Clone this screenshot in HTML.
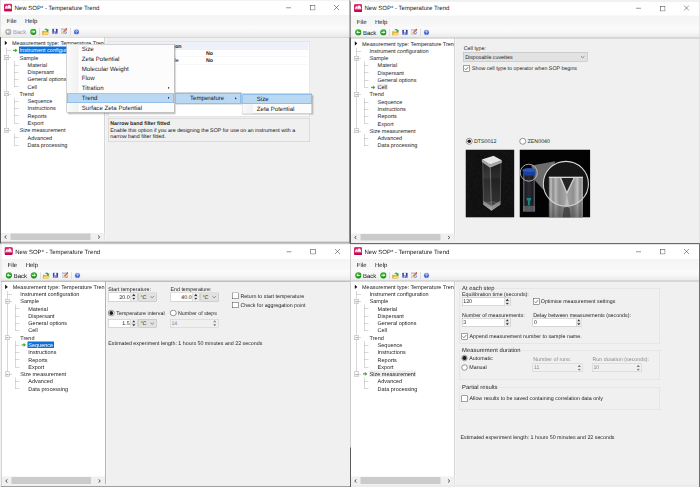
<!DOCTYPE html><html><head><meta charset="utf-8"><title>New SOP* - Temperature Trend</title><style>
html,body{margin:0;padding:0;background:#f0f0f0;}
body{width:700px;height:487px;overflow:hidden;position:relative;font-family:"Liberation Sans",sans-serif;}
#root{position:absolute;left:0;top:0;width:1400px;height:974px;transform:scale(0.5);transform-origin:0 0;}
.win{position:absolute;width:700px;height:487px;overflow:hidden;background:#f0f0f0;}
.win div,.win svg{position:absolute;}
.t{white-space:nowrap;text-rendering:geometricPrecision;}
</style></head><body><div id="root"><div class="win" style="left:0px;top:0px;"><div style="left:0px;top:0px;width:700px;height:30.4px;background:#fff;"></div><svg style="left:7.9px;top:6.6px;" width="16.4" height="16.4" viewBox="0 0 16 16" preserveAspectRatio="none"><defs><linearGradient id="ig" x1="0" y1="0" x2="0" y2="1"><stop offset="0" stop-color="#e8306f"/><stop offset="1" stop-color="#c4004e"/></linearGradient></defs><rect x="0.3" y="0.3" width="15.4" height="15.4" rx="2.6" fill="#d4005a"/><rect x="0.3" y="0.3" width="15.4" height="15.4" rx="2.6" fill="url(#ig)"/><path d="M1.4 10.2 C1.8 8 3.6 4.6 5.4 4.4 C6.2 4.3 6.8 4.8 7.2 5.4 C7.8 3.6 9 2.9 10 2.9 C12.6 2.9 14 7 14.6 10.2 Z" fill="#fff"/><path d="M5.2 9.2 L7.4 5" stroke="#d4005a" stroke-width="0.6"/><rect x="1.4" y="8.7" width="13.2" height="0.5" fill="#e23a78"/></svg><div class="t" style="left:29px;top:8.2px;font-size:12.06px;line-height:15.68px;color:#1a1a1a;">New SOP* - Temperature Trend</div><svg style="left:571px;top:9px;" width="12" height="12" viewBox="0 0 12 12" preserveAspectRatio="none"><path d="M1 6.5 L11 6.5" stroke="#333" stroke-width="1"/></svg><svg style="left:618.8px;top:9.4px;" width="12" height="12" viewBox="0 0 12 12" preserveAspectRatio="none"><rect x="1.5" y="1.5" width="9.5" height="9.5" fill="none" stroke="#333" stroke-width="1"/></svg><svg style="left:667.2px;top:9.2px;" width="12" height="12" viewBox="0 0 12 12" preserveAspectRatio="none"><path d="M1 1 L11 11 M11 1 L1 11" stroke="#333" stroke-width="1"/></svg><div style="left:0px;top:30.2px;width:700px;height:21.2px;background:linear-gradient(#f4f4f4,#f8f8f8);"></div><div class="t" style="left:13.6px;top:35.04px;font-size:12px;line-height:15.6px;color:#111;">File</div><div class="t" style="left:50px;top:35.04px;font-size:12px;line-height:15.6px;color:#111;">Help</div><div style="left:0px;top:51.4px;width:700px;height:23px;background:linear-gradient(#fcfcfc 0%,#f7f7f7 50%,#e9e9e9 100%);"></div><div style="left:0px;top:73.6px;width:700px;height:1.8px;background:linear-gradient(#c4c4c4,#8c8c8c);"></div><svg style="left:9.5px;top:56.6px;" width="13.4" height="13.4" viewBox="0 0 16 16" preserveAspectRatio="none"><defs><radialGradient id="dl" cx="0.4" cy="0.3" r="0.8"><stop offset="0" stop-color="#bfbfbf"/><stop offset="0.65" stop-color="#adadad"/><stop offset="1" stop-color="#9a9a9a"/></radialGradient></defs><circle cx="8" cy="8" r="7.5" fill="url(#dl)"/><path d="M3.2 8 L7.6 4.4 L7.6 6.9 L12.6 6.9 L12.6 9.1 L7.6 9.1 L7.6 11.6 Z" fill="#fff"/></svg><div class="t" style="left:26px;top:57.04px;font-size:12px;line-height:15.6px;color:#9a9a9a;">Back</div><svg style="left:59.8px;top:56.6px;" width="13.4" height="13.4" viewBox="0 0 16 16" preserveAspectRatio="none"><defs><radialGradient id="gr" cx="0.4" cy="0.3" r="0.8"><stop offset="0" stop-color="#4fbf3f"/><stop offset="0.65" stop-color="#239a23"/><stop offset="1" stop-color="#137316"/></radialGradient></defs><circle cx="8" cy="8" r="7.5" fill="url(#gr)"/><path d="M12.8 8 L8.4 4.4 L8.4 6.9 L3.4 6.9 L3.4 9.1 L8.4 9.1 L8.4 11.6 Z" fill="#fff"/></svg><div style="left:78.4px;top:56px;width:1px;height:14.8px;background:#c6c6c6;"></div><svg style="left:83.8px;top:56px;" width="14.4" height="13.8" viewBox="0 0 16 15.3" preserveAspectRatio="none"><path d="M1 6.5 L1 14.6 L12.6 14.6 L12.6 7.6 L6 7.6 L5 6.5 Z" fill="#e9b530" stroke="#b98a14" stroke-width="0.7"/><path d="M1.4 14.4 L4 9.4 L15.4 9.4 L12.8 14.6 Z" fill="#ffdf7e" stroke="#c99a22" stroke-width="0.6"/><path d="M5.6 3.2 C8.4 0.6 12 1.4 13.2 4.4 L14.8 3.8 L13.4 8.4 L9.6 6 L11.2 5.3 C10.2 3.4 8 2.8 5.6 3.2 Z" fill="#2fa82f" stroke="#157a15" stroke-width="0.5"/></svg><svg style="left:104px;top:57.4px;" width="11.8" height="11" viewBox="0 0 16 15" preserveAspectRatio="none"><defs><linearGradient id="sg" x1="0" y1="0" x2="0" y2="1"><stop offset="0" stop-color="#23309c"/><stop offset="1" stop-color="#5563c9"/></linearGradient></defs><rect x="0.8" y="0.8" width="14.4" height="13.4" rx="0.8" fill="url(#sg)"/><rect x="5" y="0.8" width="5.6" height="7.6" fill="#f3f5ff"/><rect x="4.6" y="10" width="6.6" height="4.2" fill="#c4cbea"/><rect x="8.2" y="10.6" width="2" height="3.2" fill="#2a379f"/></svg><svg style="left:122.4px;top:56px;" width="13" height="12.4" viewBox="0 0 16 15.3" preserveAspectRatio="none"><rect x="1" y="2" width="12.4" height="12.6" fill="#f2f3fb" stroke="#9aa0cc" stroke-width="0.8"/><rect x="1.4" y="2.4" width="11.6" height="3" fill="#b9bde6"/><path d="M8 11.4 L10.4 13.8 L14.6 9.4" fill="none" stroke="#2d49c2" stroke-width="1.6"/><path d="M4.2 12.6 L5 9.4 L12.6 1 L15 3 L7.4 11.6 Z" fill="#e2762c" stroke="#8f3d12" stroke-width="0.5"/><path d="M12 1.6 L14.6 3.6 L15.4 2.4 L13 0.6 Z" fill="#cf2030"/><path d="M4.2 12.6 L5 9.4 L7.4 11.6 Z" fill="#f1d9a6"/></svg><div style="left:140.6px;top:56px;width:1px;height:14.8px;background:#c6c6c6;"></div><svg style="left:147.4px;top:57.6px;" width="11.8" height="11.8" viewBox="0 0 16 16" preserveAspectRatio="none"><defs><radialGradient id="hg" cx="0.45" cy="0.35" r="0.75"><stop offset="0" stop-color="#6f96f2"/><stop offset="0.7" stop-color="#2a52cf"/><stop offset="1" stop-color="#1e3fae"/></radialGradient></defs><circle cx="8" cy="8" r="7.7" fill="#b9c6ea"/><circle cx="8" cy="8" r="6.3" fill="url(#hg)"/><path d="M5.8 6.4 C5.8 3.8 10.4 3.8 10.4 6.4 C10.4 8 8.2 8 8.2 9.8" fill="none" stroke="#fff" stroke-width="1.8"/><circle cx="8.2" cy="12" r="1.05" fill="#fff"/></svg><div style="left:210.2px;top:75.4px;width:490px;height:405.6px;background:#f0f0f0;"></div><div style="left:2px;top:75.4px;width:206.8px;height:405.6px;background:#fff;"></div><div style="left:208.8px;top:75.4px;width:1.4px;height:405.6px;background:#b4b4b4;"></div><div style="left:210.2px;top:75.4px;width:1.2px;height:405.6px;background:#fafafa;"></div><div style="left:12.6px;top:94.54px;width:1px;height:165.94px;background:#b0b0b0;"></div><div style="left:28.4px;top:121.88px;width:1px;height:51.36px;background:#b0b0b0;"></div><div style="left:28.4px;top:194.58px;width:1px;height:51.36px;background:#b0b0b0;"></div><div style="left:28.4px;top:267.28px;width:1px;height:22.28px;background:#b0b0b0;"></div><svg style="left:8.8px;top:81.2px;" width="6" height="9.6" viewBox="0 0 6 9.6" preserveAspectRatio="none"><path d="M0.2 0.2 L5.6 4.8 L0.2 9.4 Z" fill="#111"/></svg><div class="t" style="left:24px;top:79.52px;font-size:11px;line-height:14.3px;color:#242424;max-width:184px;overflow:hidden;">Measurement type: Temperature Trend</div><div style="left:12.6px;top:100.54px;width:9.8px;height:1px;background:#b0b0b0;"></div><div style="left:37.6px;top:93.34px;width:121.2px;height:13.2px;background:#0a6fd6;"></div><svg style="left:26px;top:96.74px;" width="9" height="7.6" viewBox="0 0 10 8" preserveAspectRatio="none"><path d="M0 3 L5 3 L5 0.6 L9.4 4 L5 7.4 L5 5 L0 5 Z" fill="#22b422" stroke="#128a12" stroke-width="0.5"/></svg><div class="t" style="left:39.2px;top:94.06px;font-size:11px;line-height:14.3px;color:#fff;">Instrument configuration</div><div style="left:12.6px;top:115.08px;width:9.8px;height:1px;background:#b0b0b0;"></div><div style="left:8.4px;top:110.48px;width:9.4px;height:9.2px;background:linear-gradient(#fff,#e9e9e9);border:1px solid #adadad;box-sizing:border-box;"></div><div style="left:10.6px;top:114.58px;width:5.2px;height:1px;background:#6d78b0;"></div><div class="t" style="left:39.2px;top:108.6px;font-size:11px;line-height:14.3px;color:#242424;">Sample</div><div style="left:28.4px;top:129.62px;width:8.8px;height:1px;background:#b0b0b0;"></div><div class="t" style="left:55.2px;top:123.14px;font-size:11px;line-height:14.3px;color:#242424;">Material</div><div style="left:28.4px;top:144.16px;width:8.8px;height:1px;background:#b0b0b0;"></div><div class="t" style="left:55.2px;top:137.68px;font-size:11px;line-height:14.3px;color:#242424;">Dispersant</div><div style="left:28.4px;top:158.7px;width:8.8px;height:1px;background:#b0b0b0;"></div><div class="t" style="left:55.2px;top:152.22px;font-size:11px;line-height:14.3px;color:#242424;">General options</div><div style="left:28.4px;top:173.24px;width:8.8px;height:1px;background:#b0b0b0;"></div><div class="t" style="left:55.2px;top:166.76px;font-size:11px;line-height:14.3px;color:#242424;">Cell</div><div style="left:12.6px;top:187.78px;width:9.8px;height:1px;background:#b0b0b0;"></div><div style="left:8.4px;top:183.18px;width:9.4px;height:9.2px;background:linear-gradient(#fff,#e9e9e9);border:1px solid #adadad;box-sizing:border-box;"></div><div style="left:10.6px;top:187.28px;width:5.2px;height:1px;background:#6d78b0;"></div><div class="t" style="left:39.2px;top:181.3px;font-size:11px;line-height:14.3px;color:#242424;">Trend</div><div style="left:28.4px;top:202.32px;width:8.8px;height:1px;background:#b0b0b0;"></div><div class="t" style="left:55.2px;top:195.84px;font-size:11px;line-height:14.3px;color:#242424;">Sequence</div><div style="left:28.4px;top:216.86px;width:8.8px;height:1px;background:#b0b0b0;"></div><div class="t" style="left:55.2px;top:210.38px;font-size:11px;line-height:14.3px;color:#242424;">Instructions</div><div style="left:28.4px;top:231.4px;width:8.8px;height:1px;background:#b0b0b0;"></div><div class="t" style="left:55.2px;top:224.92px;font-size:11px;line-height:14.3px;color:#242424;">Reports</div><div style="left:28.4px;top:245.94px;width:8.8px;height:1px;background:#b0b0b0;"></div><div class="t" style="left:55.2px;top:239.46px;font-size:11px;line-height:14.3px;color:#242424;">Export</div><div style="left:12.6px;top:260.48px;width:9.8px;height:1px;background:#b0b0b0;"></div><div style="left:8.4px;top:255.88px;width:9.4px;height:9.2px;background:linear-gradient(#fff,#e9e9e9);border:1px solid #adadad;box-sizing:border-box;"></div><div style="left:10.6px;top:259.98px;width:5.2px;height:1px;background:#6d78b0;"></div><div class="t" style="left:39.2px;top:254px;font-size:11px;line-height:14.3px;color:#242424;">Size measurement</div><div style="left:28.4px;top:275.02px;width:8.8px;height:1px;background:#b0b0b0;"></div><div class="t" style="left:55.2px;top:268.54px;font-size:11px;line-height:14.3px;color:#242424;">Advanced</div><div style="left:28.4px;top:289.56px;width:8.8px;height:1px;background:#b0b0b0;"></div><div class="t" style="left:55.2px;top:283.08px;font-size:11px;line-height:14.3px;color:#242424;">Data processing</div><div style="left:2px;top:465.8px;width:206.8px;height:15.2px;background:#f0f0f0;"></div><div style="left:21.2px;top:466.6px;width:159.6px;height:13.4px;background:#cbcbcb;"></div><svg style="left:8.4px;top:470px;" width="6" height="8" viewBox="0 0 6 8" preserveAspectRatio="none"><path d="M5 0.8 L1.4 4 L5 7.2" fill="none" stroke="#333" stroke-width="1.6"/></svg><svg style="left:194.8px;top:470px;" width="6" height="8" viewBox="0 0 6 8" preserveAspectRatio="none"><path d="M1 0.8 L4.6 4 L1 7.2" fill="none" stroke="#333" stroke-width="1.6"/></svg><div style="left:0px;top:481px;width:700px;height:6.6px;background:linear-gradient(#f0f0f0 0%,#ececec 20%,#c6c6c6 40%,#a0a0a0 72%,#a2a2a2 88%,#c8c8c8 100%);"></div><div style="left:0px;top:0px;width:1.8px;height:74px;background:#e2e2e2;"></div><div style="left:0px;top:74px;width:1.8px;height:413.6px;background:#5c5c5c;"></div><div style="left:0px;top:0px;width:700px;height:1.4px;background:#e6e6e6;"></div><div style="left:698.4px;top:0px;width:1.6px;height:74px;background:#b4b4b4;"></div><div style="left:698.4px;top:74px;width:1.6px;height:413.6px;background:#8a8a8a;"></div><div style="left:215.6px;top:82.8px;width:404.2px;height:150.4px;background:#fff;border:1px solid #cfcfcf;box-sizing:border-box;"></div><div style="left:216.6px;top:84.2px;width:400.8px;height:14.4px;background:#eef1f8;"></div><div style="left:216.6px;top:98.6px;width:400.8px;height:1px;background:#e6e9f2;"></div><div style="left:216.6px;top:113.2px;width:400.8px;height:1px;background:#eef0f6;"></div><div style="left:216.6px;top:127.8px;width:400.8px;height:1px;background:#eef0f6;"></div><div class="t" style="right:336.8px;top:85.79px;font-size:10.6px;line-height:13.78px;color:#242424;font-weight:bold;">Instrument configuration</div><div class="t" style="left:230px;top:99.79px;font-size:10.6px;line-height:13.78px;color:#242424;">Narrow band filter fitted</div><div class="t" style="right:342.8px;top:114.39px;font-size:10.6px;line-height:13.78px;color:#242424;">Autotitrator available</div><div class="t" style="left:412px;top:99.79px;font-size:10.6px;line-height:13.78px;color:#242424;font-weight:bold;">No</div><div class="t" style="left:412px;top:114.39px;font-size:10.6px;line-height:13.78px;color:#242424;font-weight:bold;">No</div><div style="left:215.6px;top:236px;width:404.2px;height:48px;background:#f0f0f0;border:1px solid #c9c9c9;box-sizing:border-box;"></div><div class="t" style="left:220.6px;top:240.79px;font-size:10.6px;line-height:13.78px;color:#242424;font-weight:bold;">Narrow band filter fitted</div><div class="t" style="left:220.6px;top:254.39px;font-size:10.6px;line-height:13.78px;color:#111;">Enable this option if you are designing the SOP for use on an instrument with a</div><div class="t" style="left:220.6px;top:266.99px;font-size:10.6px;line-height:13.78px;color:#111;">narrow band filter fitted.</div><div style="left:132.8px;top:87.8px;width:216.6px;height:137.4px;background:#fcfcfc;border:1px solid #ababab;box-sizing:border-box;box-shadow:2px 2px 3px rgba(0,0,0,.35);"></div><div style="left:134px;top:89px;width:23.2px;height:135px;background:linear-gradient(90deg,#fafafa,#f1f1f1);"></div><div class="t" style="left:163.6px;top:90.1px;font-size:12.2px;line-height:15.86px;color:#1a1a1a;">Size</div><div class="t" style="left:163.6px;top:109.7px;font-size:12.2px;line-height:15.86px;color:#1a1a1a;">Zeta Potential</div><div class="t" style="left:163.6px;top:129.7px;font-size:12.2px;line-height:15.86px;color:#1a1a1a;">Molecular Weight</div><div class="t" style="left:163.6px;top:148.5px;font-size:12.2px;line-height:15.86px;color:#1a1a1a;">Flow</div><div class="t" style="left:163.6px;top:167.7px;font-size:12.2px;line-height:15.86px;color:#1a1a1a;">Titration</div><svg style="left:335.6px;top:173px;" width="3.6" height="5.2" viewBox="0 0 4 6" preserveAspectRatio="none"><path d="M0.4 0.4 L3.6 3 L0.4 5.6 Z" fill="#111"/></svg><div style="left:134.4px;top:186.8px;width:213.2px;height:18.8px;background:#b8d8f3;border:1px solid #6aa6de;box-sizing:border-box;"></div><div class="t" style="left:163.6px;top:187.9px;font-size:12.2px;line-height:15.86px;color:#1a1a1a;">Trend</div><svg style="left:335.6px;top:193.2px;" width="3.6" height="5.2" viewBox="0 0 4 6" preserveAspectRatio="none"><path d="M0.4 0.4 L3.6 3 L0.4 5.6 Z" fill="#111"/></svg><div class="t" style="left:163.6px;top:207.5px;font-size:12.2px;line-height:15.86px;color:#1a1a1a;">Surface Zeta Potential</div><div style="left:349.2px;top:185px;width:133.6px;height:23.2px;background:#fcfcfc;border:1px solid #ababab;box-sizing:border-box;box-shadow:2px 2px 3px rgba(0,0,0,.35);"></div><div style="left:350.4px;top:186.2px;width:131.2px;height:20.8px;background:#b8d8f3;border:1px solid #6aa6de;box-sizing:border-box;"></div><div class="t" style="left:380px;top:189.1px;font-size:12.2px;line-height:15.86px;color:#1a1a1a;">Temperature</div><svg style="left:470px;top:194.4px;" width="3.6" height="5.2" viewBox="0 0 4 6" preserveAspectRatio="none"><path d="M0.4 0.4 L3.6 3 L0.4 5.6 Z" fill="#111"/></svg><div style="left:483.8px;top:187px;width:140.4px;height:40.8px;background:#fcfcfc;border:1px solid #ababab;box-sizing:border-box;box-shadow:2px 2px 3px rgba(0,0,0,.35);"></div><div style="left:485px;top:188.2px;width:21.2px;height:38.4px;background:linear-gradient(90deg,#fafafa,#f1f1f1);"></div><div style="left:485.4px;top:188.4px;width:137.2px;height:19.2px;background:#b8d8f3;border:1px solid #6aa6de;box-sizing:border-box;"></div><div class="t" style="left:513.6px;top:190.7px;font-size:12.2px;line-height:15.86px;color:#1a1a1a;">Size</div><div class="t" style="left:513.6px;top:210.3px;font-size:12.2px;line-height:15.86px;color:#1a1a1a;">Zeta Potential</div></div><div class="win" style="left:700px;top:1.2px;"><div style="left:0px;top:0px;width:700px;height:30.4px;background:#fff;"></div><svg style="left:7.9px;top:6.6px;" width="16.4" height="16.4" viewBox="0 0 16 16" preserveAspectRatio="none"><defs><linearGradient id="ig" x1="0" y1="0" x2="0" y2="1"><stop offset="0" stop-color="#e8306f"/><stop offset="1" stop-color="#c4004e"/></linearGradient></defs><rect x="0.3" y="0.3" width="15.4" height="15.4" rx="2.6" fill="#d4005a"/><rect x="0.3" y="0.3" width="15.4" height="15.4" rx="2.6" fill="url(#ig)"/><path d="M1.4 10.2 C1.8 8 3.6 4.6 5.4 4.4 C6.2 4.3 6.8 4.8 7.2 5.4 C7.8 3.6 9 2.9 10 2.9 C12.6 2.9 14 7 14.6 10.2 Z" fill="#fff"/><path d="M5.2 9.2 L7.4 5" stroke="#d4005a" stroke-width="0.6"/><rect x="1.4" y="8.7" width="13.2" height="0.5" fill="#e23a78"/></svg><div class="t" style="left:29px;top:8.2px;font-size:12.06px;line-height:15.68px;color:#1a1a1a;">New SOP* - Temperature Trend</div><svg style="left:571px;top:9px;" width="12" height="12" viewBox="0 0 12 12" preserveAspectRatio="none"><path d="M1 6.5 L11 6.5" stroke="#333" stroke-width="1"/></svg><svg style="left:618.8px;top:9.4px;" width="12" height="12" viewBox="0 0 12 12" preserveAspectRatio="none"><rect x="1.5" y="1.5" width="9.5" height="9.5" fill="none" stroke="#333" stroke-width="1"/></svg><svg style="left:667.2px;top:9.2px;" width="12" height="12" viewBox="0 0 12 12" preserveAspectRatio="none"><path d="M1 1 L11 11 M11 1 L1 11" stroke="#333" stroke-width="1"/></svg><div style="left:0px;top:30.2px;width:700px;height:21.2px;background:linear-gradient(#f4f4f4,#f8f8f8);"></div><div class="t" style="left:13.6px;top:35.04px;font-size:12px;line-height:15.6px;color:#111;">File</div><div class="t" style="left:50px;top:35.04px;font-size:12px;line-height:15.6px;color:#111;">Help</div><div style="left:0px;top:51.4px;width:700px;height:23px;background:linear-gradient(#fcfcfc 0%,#f7f7f7 50%,#e9e9e9 100%);"></div><div style="left:0px;top:73.6px;width:700px;height:1.8px;background:linear-gradient(#c4c4c4,#8c8c8c);"></div><svg style="left:9.5px;top:56.6px;" width="13.4" height="13.4" viewBox="0 0 16 16" preserveAspectRatio="none"><defs><radialGradient id="gl" cx="0.4" cy="0.3" r="0.8"><stop offset="0" stop-color="#4fbf3f"/><stop offset="0.65" stop-color="#239a23"/><stop offset="1" stop-color="#137316"/></radialGradient></defs><circle cx="8" cy="8" r="7.5" fill="url(#gl)"/><path d="M3.2 8 L7.6 4.4 L7.6 6.9 L12.6 6.9 L12.6 9.1 L7.6 9.1 L7.6 11.6 Z" fill="#fff"/></svg><div class="t" style="left:26px;top:57.04px;font-size:12px;line-height:15.6px;color:#111;">Back</div><svg style="left:59.8px;top:56.6px;" width="13.4" height="13.4" viewBox="0 0 16 16" preserveAspectRatio="none"><defs><radialGradient id="gr" cx="0.4" cy="0.3" r="0.8"><stop offset="0" stop-color="#4fbf3f"/><stop offset="0.65" stop-color="#239a23"/><stop offset="1" stop-color="#137316"/></radialGradient></defs><circle cx="8" cy="8" r="7.5" fill="url(#gr)"/><path d="M12.8 8 L8.4 4.4 L8.4 6.9 L3.4 6.9 L3.4 9.1 L8.4 9.1 L8.4 11.6 Z" fill="#fff"/></svg><div style="left:78.4px;top:56px;width:1px;height:14.8px;background:#c6c6c6;"></div><svg style="left:83.8px;top:56px;" width="14.4" height="13.8" viewBox="0 0 16 15.3" preserveAspectRatio="none"><path d="M1 6.5 L1 14.6 L12.6 14.6 L12.6 7.6 L6 7.6 L5 6.5 Z" fill="#e9b530" stroke="#b98a14" stroke-width="0.7"/><path d="M1.4 14.4 L4 9.4 L15.4 9.4 L12.8 14.6 Z" fill="#ffdf7e" stroke="#c99a22" stroke-width="0.6"/><path d="M5.6 3.2 C8.4 0.6 12 1.4 13.2 4.4 L14.8 3.8 L13.4 8.4 L9.6 6 L11.2 5.3 C10.2 3.4 8 2.8 5.6 3.2 Z" fill="#2fa82f" stroke="#157a15" stroke-width="0.5"/></svg><svg style="left:104px;top:57.4px;" width="11.8" height="11" viewBox="0 0 16 15" preserveAspectRatio="none"><defs><linearGradient id="sg" x1="0" y1="0" x2="0" y2="1"><stop offset="0" stop-color="#23309c"/><stop offset="1" stop-color="#5563c9"/></linearGradient></defs><rect x="0.8" y="0.8" width="14.4" height="13.4" rx="0.8" fill="url(#sg)"/><rect x="5" y="0.8" width="5.6" height="7.6" fill="#f3f5ff"/><rect x="4.6" y="10" width="6.6" height="4.2" fill="#c4cbea"/><rect x="8.2" y="10.6" width="2" height="3.2" fill="#2a379f"/></svg><svg style="left:122.4px;top:56px;" width="13" height="12.4" viewBox="0 0 16 15.3" preserveAspectRatio="none"><rect x="1" y="2" width="12.4" height="12.6" fill="#f2f3fb" stroke="#9aa0cc" stroke-width="0.8"/><rect x="1.4" y="2.4" width="11.6" height="3" fill="#b9bde6"/><path d="M8 11.4 L10.4 13.8 L14.6 9.4" fill="none" stroke="#2d49c2" stroke-width="1.6"/><path d="M4.2 12.6 L5 9.4 L12.6 1 L15 3 L7.4 11.6 Z" fill="#e2762c" stroke="#8f3d12" stroke-width="0.5"/><path d="M12 1.6 L14.6 3.6 L15.4 2.4 L13 0.6 Z" fill="#cf2030"/><path d="M4.2 12.6 L5 9.4 L7.4 11.6 Z" fill="#f1d9a6"/></svg><div style="left:140.6px;top:56px;width:1px;height:14.8px;background:#c6c6c6;"></div><svg style="left:147.4px;top:57.6px;" width="11.8" height="11.8" viewBox="0 0 16 16" preserveAspectRatio="none"><defs><radialGradient id="hg" cx="0.45" cy="0.35" r="0.75"><stop offset="0" stop-color="#6f96f2"/><stop offset="0.7" stop-color="#2a52cf"/><stop offset="1" stop-color="#1e3fae"/></radialGradient></defs><circle cx="8" cy="8" r="7.7" fill="#b9c6ea"/><circle cx="8" cy="8" r="6.3" fill="url(#hg)"/><path d="M5.8 6.4 C5.8 3.8 10.4 3.8 10.4 6.4 C10.4 8 8.2 8 8.2 9.8" fill="none" stroke="#fff" stroke-width="1.8"/><circle cx="8.2" cy="12" r="1.05" fill="#fff"/></svg><div style="left:210.2px;top:75.4px;width:490px;height:405.6px;background:#f0f0f0;"></div><div style="left:2px;top:75.4px;width:206.8px;height:405.6px;background:#fff;"></div><div style="left:208.8px;top:75.4px;width:1.4px;height:405.6px;background:#b4b4b4;"></div><div style="left:210.2px;top:75.4px;width:1.2px;height:405.6px;background:#fafafa;"></div><div style="left:12.6px;top:94.54px;width:1px;height:165.94px;background:#b0b0b0;"></div><div style="left:28.4px;top:121.88px;width:1px;height:51.36px;background:#b0b0b0;"></div><div style="left:28.4px;top:194.58px;width:1px;height:51.36px;background:#b0b0b0;"></div><div style="left:28.4px;top:267.28px;width:1px;height:22.28px;background:#b0b0b0;"></div><svg style="left:8.8px;top:81.2px;" width="6" height="9.6" viewBox="0 0 6 9.6" preserveAspectRatio="none"><path d="M0.2 0.2 L5.6 4.8 L0.2 9.4 Z" fill="#111"/></svg><div class="t" style="left:24px;top:79.52px;font-size:11px;line-height:14.3px;color:#242424;max-width:184px;overflow:hidden;">Measurement type: Temperature Trend</div><div style="left:12.6px;top:100.54px;width:9.8px;height:1px;background:#b0b0b0;"></div><div class="t" style="left:39.2px;top:94.06px;font-size:11px;line-height:14.3px;color:#242424;">Instrument configuration</div><div style="left:12.6px;top:115.08px;width:9.8px;height:1px;background:#b0b0b0;"></div><div style="left:8.4px;top:110.48px;width:9.4px;height:9.2px;background:linear-gradient(#fff,#e9e9e9);border:1px solid #adadad;box-sizing:border-box;"></div><div style="left:10.6px;top:114.58px;width:5.2px;height:1px;background:#6d78b0;"></div><div class="t" style="left:39.2px;top:108.6px;font-size:11px;line-height:14.3px;color:#242424;">Sample</div><div style="left:28.4px;top:129.62px;width:8.8px;height:1px;background:#b0b0b0;"></div><div class="t" style="left:55.2px;top:123.14px;font-size:11px;line-height:14.3px;color:#242424;">Material</div><div style="left:28.4px;top:144.16px;width:8.8px;height:1px;background:#b0b0b0;"></div><div class="t" style="left:55.2px;top:137.68px;font-size:11px;line-height:14.3px;color:#242424;">Dispersant</div><div style="left:28.4px;top:158.7px;width:8.8px;height:1px;background:#b0b0b0;"></div><div class="t" style="left:55.2px;top:152.22px;font-size:11px;line-height:14.3px;color:#242424;">General options</div><div style="left:28.4px;top:173.24px;width:8.8px;height:1px;background:#b0b0b0;"></div><div style="left:53.6px;top:166.04px;width:22.15px;height:13.2px;background:#eeeeee;"></div><svg style="left:42px;top:169.44px;" width="9" height="7.6" viewBox="0 0 10 8" preserveAspectRatio="none"><path d="M0 3 L5 3 L5 0.6 L9.4 4 L5 7.4 L5 5 L0 5 Z" fill="#22b422" stroke="#128a12" stroke-width="0.5"/></svg><div class="t" style="left:55.2px;top:166.76px;font-size:11px;line-height:14.3px;color:#242424;">Cell</div><div style="left:12.6px;top:187.78px;width:9.8px;height:1px;background:#b0b0b0;"></div><div style="left:8.4px;top:183.18px;width:9.4px;height:9.2px;background:linear-gradient(#fff,#e9e9e9);border:1px solid #adadad;box-sizing:border-box;"></div><div style="left:10.6px;top:187.28px;width:5.2px;height:1px;background:#6d78b0;"></div><div class="t" style="left:39.2px;top:181.3px;font-size:11px;line-height:14.3px;color:#242424;">Trend</div><div style="left:28.4px;top:202.32px;width:8.8px;height:1px;background:#b0b0b0;"></div><div class="t" style="left:55.2px;top:195.84px;font-size:11px;line-height:14.3px;color:#242424;">Sequence</div><div style="left:28.4px;top:216.86px;width:8.8px;height:1px;background:#b0b0b0;"></div><div class="t" style="left:55.2px;top:210.38px;font-size:11px;line-height:14.3px;color:#242424;">Instructions</div><div style="left:28.4px;top:231.4px;width:8.8px;height:1px;background:#b0b0b0;"></div><div class="t" style="left:55.2px;top:224.92px;font-size:11px;line-height:14.3px;color:#242424;">Reports</div><div style="left:28.4px;top:245.94px;width:8.8px;height:1px;background:#b0b0b0;"></div><div class="t" style="left:55.2px;top:239.46px;font-size:11px;line-height:14.3px;color:#242424;">Export</div><div style="left:12.6px;top:260.48px;width:9.8px;height:1px;background:#b0b0b0;"></div><div style="left:8.4px;top:255.88px;width:9.4px;height:9.2px;background:linear-gradient(#fff,#e9e9e9);border:1px solid #adadad;box-sizing:border-box;"></div><div style="left:10.6px;top:259.98px;width:5.2px;height:1px;background:#6d78b0;"></div><div class="t" style="left:39.2px;top:254px;font-size:11px;line-height:14.3px;color:#242424;">Size measurement</div><div style="left:28.4px;top:275.02px;width:8.8px;height:1px;background:#b0b0b0;"></div><div class="t" style="left:55.2px;top:268.54px;font-size:11px;line-height:14.3px;color:#242424;">Advanced</div><div style="left:28.4px;top:289.56px;width:8.8px;height:1px;background:#b0b0b0;"></div><div class="t" style="left:55.2px;top:283.08px;font-size:11px;line-height:14.3px;color:#242424;">Data processing</div><div style="left:2px;top:465.8px;width:206.8px;height:15.2px;background:#f0f0f0;"></div><div style="left:21.2px;top:466.6px;width:159.6px;height:13.4px;background:#cbcbcb;"></div><svg style="left:8.4px;top:470px;" width="6" height="8" viewBox="0 0 6 8" preserveAspectRatio="none"><path d="M5 0.8 L1.4 4 L5 7.2" fill="none" stroke="#333" stroke-width="1.6"/></svg><svg style="left:194.8px;top:470px;" width="6" height="8" viewBox="0 0 6 8" preserveAspectRatio="none"><path d="M1 0.8 L4.6 4 L1 7.2" fill="none" stroke="#333" stroke-width="1.6"/></svg><div style="left:0px;top:481px;width:700px;height:6.6px;background:linear-gradient(#f2f2f2 0%,#f0f0f0 55%,#6a6a6a 62%,#6a6a6a 88%,#bbb 100%);"></div><div style="left:0px;top:0px;width:2.3px;height:74px;background:#9a9a9a;"></div><div style="left:0px;top:74px;width:2.3px;height:413.6px;background:#5c5c5c;"></div><div style="left:0px;top:0px;width:700px;height:1.4px;background:#e6e6e6;"></div><div style="left:698.6px;top:0px;width:1.4px;height:486px;background:#d4d4d4;"></div><div style="left:-700px;top:-1.2px;width:1400px;height:974px;"><div class="t" style="left:927.6px;top:90.19px;font-size:10.6px;line-height:13.78px;color:#242424;">Cell type:</div><div style="left:926px;top:104px;width:248.6px;height:18.6px;background:#e2e2e2;border:1px solid #b6b6b6;box-sizing:border-box;"></div><div class="t" style="left:930.4px;top:107.69px;font-size:10.6px;line-height:13.78px;color:#242424;">Disposable cuvettes</div><svg style="left:1161px;top:110.5px;" width="8.8" height="6" viewBox="0 0 10 7" preserveAspectRatio="none"><path d="M1 1.5 L5 5.5 L9 1.5" fill="none" stroke="#444" stroke-width="1.3"/></svg><div style="left:926.6px;top:130px;width:12.8px;height:12.8px;background:#fff;border:1px solid #444;box-sizing:border-box;"></div><svg style="left:928.4px;top:131.6px;" width="9.6" height="9.6" viewBox="0 0 10 10" preserveAspectRatio="none"><path d="M1.4 5.2 L4 7.8 L8.8 2.2" fill="none" stroke="#222" stroke-width="1.2"/></svg><div class="t" style="left:944px;top:130.19px;font-size:10.6px;line-height:13.78px;color:#242424;">Show cell type to operator when SOP begins</div><div style="left:932px;top:276px;width:12.8px;height:12.8px;background:#fff;border:1px solid #333;border-radius:50%;box-sizing:border-box;"></div><div style="left:934.8px;top:278.8px;width:7.2px;height:7.2px;background:#1a1a1a;border-radius:50%;"></div><div class="t" style="left:948px;top:276.99px;font-size:10.6px;line-height:13.78px;color:#242424;">DTS0012</div><div style="left:1039.2px;top:276px;width:12.8px;height:12.8px;background:#fff;border:1px solid #333;border-radius:50%;box-sizing:border-box;"></div><div class="t" style="left:1055.2px;top:276.99px;font-size:10.6px;line-height:13.78px;color:#242424;">ZEN0040</div><svg style="left:931.2px;top:299.2px;" width="97.8" height="136.2" viewBox="0 0 195 273" preserveAspectRatio="none">
<defs>
<linearGradient id="c1l" x1="0" y1="0" x2="0" y2="1"><stop offset="0" stop-color="#262626"/><stop offset=".3" stop-color="#3a3a3a"/><stop offset=".36" stop-color="#2c2c2c"/><stop offset=".8" stop-color="#3b3b3b"/><stop offset="1" stop-color="#8c8c8c"/></linearGradient>
<linearGradient id="c1r" x1="0" y1="0" x2="0" y2="1"><stop offset="0" stop-color="#1b1b1b"/><stop offset=".3" stop-color="#2d2d2d"/><stop offset=".36" stop-color="#222"/><stop offset=".8" stop-color="#303030"/><stop offset="1" stop-color="#7a7a7a"/></linearGradient>
<filter id="nz" x="0" y="0" width="100%" height="100%"><feTurbulence type="fractalNoise" baseFrequency="0.35" numOctaves="2" seed="3"/><feColorMatrix values="0 0 0 0 1  0 0 0 0 1  0 0 0 0 1  0.5 0.5 0.5 0 -0.62"/></filter>
</defs>
<rect width="195" height="273" fill="#0f0f0f"/>
<rect width="195" height="273" filter="url(#nz)" opacity=".1"/>
<path d="M68 52 L99 73 L103.4 244 L71 220 Z" fill="url(#c1l)"/>
<path d="M99 73 L142 52 L139 220 L103.4 244 Z" fill="url(#c1r)"/>
<path d="M71 205 L103 228 L139.4 205 L139 220 L103.4 244 L71 220 Z" fill="#bdbdbd" opacity=".55"/>
<path d="M71 220 L106 209 L139 220" fill="none" stroke="#9a9a9a" stroke-width="1.6" opacity=".7"/>
<path d="M99 73 L103.4 244" stroke="#b5b5b5" stroke-width="2.4" opacity=".85"/>
<path d="M68.5 52 L71.5 220" stroke="#8e8e8e" stroke-width="2" opacity=".8"/>
<path d="M141.5 52 L138.5 220" stroke="#8a8a8a" stroke-width="2" opacity=".8"/>
<path d="M71 220 L103.4 244 L139 220" fill="none" stroke="#d0d0d0" stroke-width="2.4" opacity=".85"/>
<path d="M65 40 L65 50 L97.5 73 L145 53 L145 43 L97.5 61 Z" fill="#a9a9a9"/>
<path d="M65 40 L112 25 L145 43 L97.5 61 Z" fill="#dcdcdc"/>
<path d="M70 40.5 L111 28 L139 43 L97.5 57 Z" fill="#e6e6e6"/>
</svg><svg style="left:1039.4px;top:299.2px;" width="141.4" height="136.2" viewBox="0 0 282 273" preserveAspectRatio="none">
<defs>
<clipPath id="bc"><circle cx="185" cy="137.7" r="90"/></clipPath>
<linearGradient id="c2b" x1="0" y1="0" x2="1" y2="0"><stop offset="0" stop-color="#6d6d6d"/><stop offset=".06" stop-color="#c2c2c2"/><stop offset=".12" stop-color="#8b8b8b"/><stop offset=".2" stop-color="#b9b9b9"/><stop offset=".3" stop-color="#8f8f8f"/><stop offset=".5" stop-color="#a6a6a6"/><stop offset=".72" stop-color="#909090"/><stop offset=".84" stop-color="#c0c0c0"/><stop offset=".92" stop-color="#8a8a8a"/><stop offset="1" stop-color="#b5b5b5"/></linearGradient>
<linearGradient id="c2d" x1="0" y1="0" x2="0" y2="1"><stop offset="0" stop-color="#000" stop-opacity="0"/><stop offset="1" stop-color="#000" stop-opacity=".35"/></linearGradient>
<linearGradient id="c2s" x1="0" y1="0" x2="1" y2="0"><stop offset="0" stop-color="#62646c"/><stop offset=".2" stop-color="#1e1e24"/><stop offset=".5" stop-color="#2c2c34"/><stop offset=".8" stop-color="#1c1c22"/><stop offset="1" stop-color="#5e606a"/></linearGradient>
</defs>
<rect width="282" height="273" fill="#030303"/>
<path d="M47 64 L143 47 L101 168 L62 124 Z" fill="#757575" opacity=".92"/>
<rect x="14" y="92" width="48" height="158" rx="5" fill="url(#c2s)"/>
<rect x="14" y="226" width="48" height="24" rx="5" fill="#7d7f88" opacity=".55"/>
<path d="M13 79 Q37 72 63 79 L62 102 Q37 108 14 102 Z" fill="#1b3f9c"/>
<path d="M13 79 Q37 72 63 79 L63 87 Q37 92 13 87 Z" fill="#2f58be"/>
<path d="M28 194 L47 194 L45 204 L41 204 L41 224 L34 224 L34 204 L30 204 Z" fill="#168a80"/>
<circle cx="37" cy="93" r="34" fill="none" stroke="#cfcfcf" stroke-width="3.2"/>
<rect x="117" y="150" width="136" height="123" fill="url(#c2b)"/>
<rect x="117" y="150" width="136" height="123" fill="url(#c2d)"/>
<path d="M172 273 L177 236 Q188 226 199 236 L204 273 Z" fill="#333" opacity=".7"/>
<circle cx="185" cy="137.7" r="90" fill="#161616"/>
<g clip-path="url(#bc)">
<rect x="117" y="111" width="136" height="130" fill="url(#c2b)"/>
<rect x="117" y="109" width="136" height="5" fill="#dedede"/>
<path d="M160 114 L221 114 L189 180 Z" fill="#cfcfcf"/>
<path d="M167 114 L215 114 L189 168 Z" fill="#242424"/>
<path d="M189 176 L180 240 L200 240 Z" fill="#d0d0d0" opacity=".6"/>
</g>
<circle cx="185" cy="137.7" r="90" fill="none" stroke="#d8d8d8" stroke-width="4.2"/>
</svg></div></div><div class="win" style="left:1.4px;top:487.6px;"><div style="left:0px;top:0px;width:700px;height:30.4px;background:#fff;"></div><svg style="left:7.9px;top:6.6px;" width="16.4" height="16.4" viewBox="0 0 16 16" preserveAspectRatio="none"><defs><linearGradient id="ig" x1="0" y1="0" x2="0" y2="1"><stop offset="0" stop-color="#e8306f"/><stop offset="1" stop-color="#c4004e"/></linearGradient></defs><rect x="0.3" y="0.3" width="15.4" height="15.4" rx="2.6" fill="#d4005a"/><rect x="0.3" y="0.3" width="15.4" height="15.4" rx="2.6" fill="url(#ig)"/><path d="M1.4 10.2 C1.8 8 3.6 4.6 5.4 4.4 C6.2 4.3 6.8 4.8 7.2 5.4 C7.8 3.6 9 2.9 10 2.9 C12.6 2.9 14 7 14.6 10.2 Z" fill="#fff"/><path d="M5.2 9.2 L7.4 5" stroke="#d4005a" stroke-width="0.6"/><rect x="1.4" y="8.7" width="13.2" height="0.5" fill="#e23a78"/></svg><div class="t" style="left:29px;top:8.2px;font-size:12.06px;line-height:15.68px;color:#1a1a1a;">New SOP* - Temperature Trend</div><svg style="left:571px;top:9px;" width="12" height="12" viewBox="0 0 12 12" preserveAspectRatio="none"><path d="M1 6.5 L11 6.5" stroke="#333" stroke-width="1"/></svg><svg style="left:618.8px;top:9.4px;" width="12" height="12" viewBox="0 0 12 12" preserveAspectRatio="none"><rect x="1.5" y="1.5" width="9.5" height="9.5" fill="none" stroke="#333" stroke-width="1"/></svg><svg style="left:667.2px;top:9.2px;" width="12" height="12" viewBox="0 0 12 12" preserveAspectRatio="none"><path d="M1 1 L11 11 M11 1 L1 11" stroke="#333" stroke-width="1"/></svg><div style="left:0px;top:30.2px;width:700px;height:21.2px;background:linear-gradient(#f4f4f4,#f8f8f8);"></div><div class="t" style="left:13.6px;top:35.04px;font-size:12px;line-height:15.6px;color:#111;">File</div><div class="t" style="left:50px;top:35.04px;font-size:12px;line-height:15.6px;color:#111;">Help</div><div style="left:0px;top:51.4px;width:700px;height:23px;background:linear-gradient(#fcfcfc 0%,#f7f7f7 50%,#e9e9e9 100%);"></div><div style="left:0px;top:73.6px;width:700px;height:1.8px;background:linear-gradient(#c4c4c4,#8c8c8c);"></div><svg style="left:9.5px;top:56.6px;" width="13.4" height="13.4" viewBox="0 0 16 16" preserveAspectRatio="none"><defs><radialGradient id="gl" cx="0.4" cy="0.3" r="0.8"><stop offset="0" stop-color="#4fbf3f"/><stop offset="0.65" stop-color="#239a23"/><stop offset="1" stop-color="#137316"/></radialGradient></defs><circle cx="8" cy="8" r="7.5" fill="url(#gl)"/><path d="M3.2 8 L7.6 4.4 L7.6 6.9 L12.6 6.9 L12.6 9.1 L7.6 9.1 L7.6 11.6 Z" fill="#fff"/></svg><div class="t" style="left:26px;top:57.04px;font-size:12px;line-height:15.6px;color:#111;">Back</div><svg style="left:59.8px;top:56.6px;" width="13.4" height="13.4" viewBox="0 0 16 16" preserveAspectRatio="none"><defs><radialGradient id="gr" cx="0.4" cy="0.3" r="0.8"><stop offset="0" stop-color="#4fbf3f"/><stop offset="0.65" stop-color="#239a23"/><stop offset="1" stop-color="#137316"/></radialGradient></defs><circle cx="8" cy="8" r="7.5" fill="url(#gr)"/><path d="M12.8 8 L8.4 4.4 L8.4 6.9 L3.4 6.9 L3.4 9.1 L8.4 9.1 L8.4 11.6 Z" fill="#fff"/></svg><div style="left:78.4px;top:56px;width:1px;height:14.8px;background:#c6c6c6;"></div><svg style="left:83.8px;top:56px;" width="14.4" height="13.8" viewBox="0 0 16 15.3" preserveAspectRatio="none"><path d="M1 6.5 L1 14.6 L12.6 14.6 L12.6 7.6 L6 7.6 L5 6.5 Z" fill="#e9b530" stroke="#b98a14" stroke-width="0.7"/><path d="M1.4 14.4 L4 9.4 L15.4 9.4 L12.8 14.6 Z" fill="#ffdf7e" stroke="#c99a22" stroke-width="0.6"/><path d="M5.6 3.2 C8.4 0.6 12 1.4 13.2 4.4 L14.8 3.8 L13.4 8.4 L9.6 6 L11.2 5.3 C10.2 3.4 8 2.8 5.6 3.2 Z" fill="#2fa82f" stroke="#157a15" stroke-width="0.5"/></svg><svg style="left:104px;top:57.4px;" width="11.8" height="11" viewBox="0 0 16 15" preserveAspectRatio="none"><defs><linearGradient id="sg" x1="0" y1="0" x2="0" y2="1"><stop offset="0" stop-color="#23309c"/><stop offset="1" stop-color="#5563c9"/></linearGradient></defs><rect x="0.8" y="0.8" width="14.4" height="13.4" rx="0.8" fill="url(#sg)"/><rect x="5" y="0.8" width="5.6" height="7.6" fill="#f3f5ff"/><rect x="4.6" y="10" width="6.6" height="4.2" fill="#c4cbea"/><rect x="8.2" y="10.6" width="2" height="3.2" fill="#2a379f"/></svg><svg style="left:122.4px;top:56px;" width="13" height="12.4" viewBox="0 0 16 15.3" preserveAspectRatio="none"><rect x="1" y="2" width="12.4" height="12.6" fill="#f2f3fb" stroke="#9aa0cc" stroke-width="0.8"/><rect x="1.4" y="2.4" width="11.6" height="3" fill="#b9bde6"/><path d="M8 11.4 L10.4 13.8 L14.6 9.4" fill="none" stroke="#2d49c2" stroke-width="1.6"/><path d="M4.2 12.6 L5 9.4 L12.6 1 L15 3 L7.4 11.6 Z" fill="#e2762c" stroke="#8f3d12" stroke-width="0.5"/><path d="M12 1.6 L14.6 3.6 L15.4 2.4 L13 0.6 Z" fill="#cf2030"/><path d="M4.2 12.6 L5 9.4 L7.4 11.6 Z" fill="#f1d9a6"/></svg><div style="left:140.6px;top:56px;width:1px;height:14.8px;background:#c6c6c6;"></div><svg style="left:147.4px;top:57.6px;" width="11.8" height="11.8" viewBox="0 0 16 16" preserveAspectRatio="none"><defs><radialGradient id="hg" cx="0.45" cy="0.35" r="0.75"><stop offset="0" stop-color="#6f96f2"/><stop offset="0.7" stop-color="#2a52cf"/><stop offset="1" stop-color="#1e3fae"/></radialGradient></defs><circle cx="8" cy="8" r="7.7" fill="#b9c6ea"/><circle cx="8" cy="8" r="6.3" fill="url(#hg)"/><path d="M5.8 6.4 C5.8 3.8 10.4 3.8 10.4 6.4 C10.4 8 8.2 8 8.2 9.8" fill="none" stroke="#fff" stroke-width="1.8"/><circle cx="8.2" cy="12" r="1.05" fill="#fff"/></svg><div style="left:210.2px;top:75.4px;width:490px;height:405.6px;background:#f0f0f0;"></div><div style="left:2px;top:75.4px;width:206.8px;height:405.6px;background:#fff;"></div><div style="left:208.8px;top:75.4px;width:1.4px;height:405.6px;background:#b4b4b4;"></div><div style="left:210.2px;top:75.4px;width:1.2px;height:405.6px;background:#fafafa;"></div><div style="left:12.6px;top:94.54px;width:1px;height:165.94px;background:#b0b0b0;"></div><div style="left:28.4px;top:121.88px;width:1px;height:51.36px;background:#b0b0b0;"></div><div style="left:28.4px;top:194.58px;width:1px;height:51.36px;background:#b0b0b0;"></div><div style="left:28.4px;top:267.28px;width:1px;height:22.28px;background:#b0b0b0;"></div><svg style="left:8.8px;top:81.2px;" width="6" height="9.6" viewBox="0 0 6 9.6" preserveAspectRatio="none"><path d="M0.2 0.2 L5.6 4.8 L0.2 9.4 Z" fill="#111"/></svg><div class="t" style="left:24px;top:79.52px;font-size:11px;line-height:14.3px;color:#242424;max-width:184px;overflow:hidden;">Measurement type: Temperature Trend</div><div style="left:12.6px;top:100.54px;width:9.8px;height:1px;background:#b0b0b0;"></div><div class="t" style="left:39.2px;top:94.06px;font-size:11px;line-height:14.3px;color:#242424;">Instrument configuration</div><div style="left:12.6px;top:115.08px;width:9.8px;height:1px;background:#b0b0b0;"></div><div style="left:8.4px;top:110.48px;width:9.4px;height:9.2px;background:linear-gradient(#fff,#e9e9e9);border:1px solid #adadad;box-sizing:border-box;"></div><div style="left:10.6px;top:114.58px;width:5.2px;height:1px;background:#6d78b0;"></div><div class="t" style="left:39.2px;top:108.6px;font-size:11px;line-height:14.3px;color:#242424;">Sample</div><div style="left:28.4px;top:129.62px;width:8.8px;height:1px;background:#b0b0b0;"></div><div class="t" style="left:55.2px;top:123.14px;font-size:11px;line-height:14.3px;color:#242424;">Material</div><div style="left:28.4px;top:144.16px;width:8.8px;height:1px;background:#b0b0b0;"></div><div class="t" style="left:55.2px;top:137.68px;font-size:11px;line-height:14.3px;color:#242424;">Dispersant</div><div style="left:28.4px;top:158.7px;width:8.8px;height:1px;background:#b0b0b0;"></div><div class="t" style="left:55.2px;top:152.22px;font-size:11px;line-height:14.3px;color:#242424;">General options</div><div style="left:28.4px;top:173.24px;width:8.8px;height:1px;background:#b0b0b0;"></div><div class="t" style="left:55.2px;top:166.76px;font-size:11px;line-height:14.3px;color:#242424;">Cell</div><div style="left:12.6px;top:187.78px;width:9.8px;height:1px;background:#b0b0b0;"></div><div style="left:8.4px;top:183.18px;width:9.4px;height:9.2px;background:linear-gradient(#fff,#e9e9e9);border:1px solid #adadad;box-sizing:border-box;"></div><div style="left:10.6px;top:187.28px;width:5.2px;height:1px;background:#6d78b0;"></div><div class="t" style="left:39.2px;top:181.3px;font-size:11px;line-height:14.3px;color:#242424;">Trend</div><div style="left:28.4px;top:202.32px;width:8.8px;height:1px;background:#b0b0b0;"></div><div style="left:53.6px;top:195.12px;width:52.74px;height:13.2px;background:#0a6fd6;"></div><svg style="left:42px;top:198.52px;" width="9" height="7.6" viewBox="0 0 10 8" preserveAspectRatio="none"><path d="M0 3 L5 3 L5 0.6 L9.4 4 L5 7.4 L5 5 L0 5 Z" fill="#22b422" stroke="#128a12" stroke-width="0.5"/></svg><div class="t" style="left:55.2px;top:195.84px;font-size:11px;line-height:14.3px;color:#fff;">Sequence</div><div style="left:28.4px;top:216.86px;width:8.8px;height:1px;background:#b0b0b0;"></div><div class="t" style="left:55.2px;top:210.38px;font-size:11px;line-height:14.3px;color:#242424;">Instructions</div><div style="left:28.4px;top:231.4px;width:8.8px;height:1px;background:#b0b0b0;"></div><div class="t" style="left:55.2px;top:224.92px;font-size:11px;line-height:14.3px;color:#242424;">Reports</div><div style="left:28.4px;top:245.94px;width:8.8px;height:1px;background:#b0b0b0;"></div><div class="t" style="left:55.2px;top:239.46px;font-size:11px;line-height:14.3px;color:#242424;">Export</div><div style="left:12.6px;top:260.48px;width:9.8px;height:1px;background:#b0b0b0;"></div><div style="left:8.4px;top:255.88px;width:9.4px;height:9.2px;background:linear-gradient(#fff,#e9e9e9);border:1px solid #adadad;box-sizing:border-box;"></div><div style="left:10.6px;top:259.98px;width:5.2px;height:1px;background:#6d78b0;"></div><div class="t" style="left:39.2px;top:254px;font-size:11px;line-height:14.3px;color:#242424;">Size measurement</div><div style="left:28.4px;top:275.02px;width:8.8px;height:1px;background:#b0b0b0;"></div><div class="t" style="left:55.2px;top:268.54px;font-size:11px;line-height:14.3px;color:#242424;">Advanced</div><div style="left:28.4px;top:289.56px;width:8.8px;height:1px;background:#b0b0b0;"></div><div class="t" style="left:55.2px;top:283.08px;font-size:11px;line-height:14.3px;color:#242424;">Data processing</div><div style="left:2px;top:465.8px;width:206.8px;height:15.2px;background:#f0f0f0;"></div><div style="left:21.2px;top:466.6px;width:159.6px;height:13.4px;background:#cbcbcb;"></div><svg style="left:8.4px;top:470px;" width="6" height="8" viewBox="0 0 6 8" preserveAspectRatio="none"><path d="M5 0.8 L1.4 4 L5 7.2" fill="none" stroke="#333" stroke-width="1.6"/></svg><svg style="left:194.8px;top:470px;" width="6" height="8" viewBox="0 0 6 8" preserveAspectRatio="none"><path d="M1 0.8 L4.6 4 L1 7.2" fill="none" stroke="#333" stroke-width="1.6"/></svg><div style="left:0px;top:481px;width:700px;height:6.6px;background:linear-gradient(#f0f0f0 0%,#efefef 55%,#8a8a8a 70%,#6a6a6a 100%);"></div><div style="left:0px;top:0px;width:1.8px;height:74px;background:#e2e2e2;"></div><div style="left:0px;top:74px;width:1.8px;height:413.6px;background:#b0b0b0;"></div><div style="left:0px;top:0px;width:700px;height:1.4px;background:#e6e6e6;"></div><div style="left:-1.4px;top:-487.6px;width:1400px;height:974px;"><div class="t" style="left:216.6px;top:572.39px;font-size:10.6px;line-height:13.78px;color:#242424;">Start temperature:</div><div style="left:216px;top:585px;width:59.2px;height:17.6px;background:#fff;border:1px solid #b4b4b4;box-sizing:border-box;"></div><div style="left:260.8px;top:586px;width:13.4px;height:15.6px;background:#efefef;border-left:1px solid #c4c4c4;box-sizing:border-box;"></div><div style="left:260.8px;top:593.3px;width:13.4px;height:1px;background:#cfcfcf;"></div><svg style="left:264px;top:587.2px;" width="7.2" height="5.2" viewBox="0 0 6 5" preserveAspectRatio="none"><path d="M0.3 4.6 L3 0.6 L5.7 4.6 Z" fill="#333"/></svg><svg style="left:264px;top:595.2px;" width="7.2" height="5.2" viewBox="0 0 6 5" preserveAspectRatio="none"><path d="M0.3 0.4 L3 4.4 L5.7 0.4 Z" fill="#333"/></svg><div class="t" style="right:1140.8px;top:587.59px;font-size:10.6px;line-height:13.78px;color:#242424;">20.0</div><div style="left:276.6px;top:585px;width:36.6px;height:17.6px;background:#e2e2e2;border:1px solid #b6b6b6;box-sizing:border-box;"></div><div class="t" style="left:281px;top:588.19px;font-size:10.6px;line-height:13.78px;color:#242424;">°C</div><svg style="left:299.6px;top:591px;" width="8.8" height="6" viewBox="0 0 10 7" preserveAspectRatio="none"><path d="M1 1.5 L5 5.5 L9 1.5" fill="none" stroke="#444" stroke-width="1.3"/></svg><div class="t" style="left:341px;top:572.39px;font-size:10.6px;line-height:13.78px;color:#242424;">End temperature:</div><div style="left:340px;top:585px;width:59.2px;height:17.6px;background:#fff;border:1px solid #b4b4b4;box-sizing:border-box;"></div><div style="left:384.8px;top:586px;width:13.4px;height:15.6px;background:#efefef;border-left:1px solid #c4c4c4;box-sizing:border-box;"></div><div style="left:384.8px;top:593.3px;width:13.4px;height:1px;background:#cfcfcf;"></div><svg style="left:388px;top:587.2px;" width="7.2" height="5.2" viewBox="0 0 6 5" preserveAspectRatio="none"><path d="M0.3 4.6 L3 0.6 L5.7 4.6 Z" fill="#333"/></svg><svg style="left:388px;top:595.2px;" width="7.2" height="5.2" viewBox="0 0 6 5" preserveAspectRatio="none"><path d="M0.3 0.4 L3 4.4 L5.7 0.4 Z" fill="#333"/></svg><div class="t" style="right:1016.8px;top:587.59px;font-size:10.6px;line-height:13.78px;color:#242424;">40.0</div><div style="left:400.6px;top:585px;width:36.6px;height:17.6px;background:#e2e2e2;border:1px solid #b6b6b6;box-sizing:border-box;"></div><div class="t" style="left:405px;top:588.19px;font-size:10.6px;line-height:13.78px;color:#242424;">°C</div><svg style="left:423.6px;top:591px;" width="8.8" height="6" viewBox="0 0 10 7" preserveAspectRatio="none"><path d="M1 1.5 L5 5.5 L9 1.5" fill="none" stroke="#444" stroke-width="1.3"/></svg><div style="left:464px;top:585.2px;width:12.8px;height:12.8px;background:#fff;border:1px solid #444;box-sizing:border-box;"></div><div class="t" style="left:481px;top:586.19px;font-size:10.6px;line-height:13.78px;color:#242424;">Return to start temperature</div><div style="left:464px;top:603.6px;width:12.8px;height:12.8px;background:#fff;border:1px solid #444;box-sizing:border-box;"></div><div class="t" style="left:481px;top:603.79px;font-size:10.6px;line-height:13.78px;color:#242424;">Check for aggregation point</div><div style="left:216.4px;top:619.6px;width:12.8px;height:12.8px;background:#fff;border:1px solid #333;border-radius:50%;box-sizing:border-box;"></div><div style="left:219.2px;top:622.4px;width:7.2px;height:7.2px;background:#1a1a1a;border-radius:50%;"></div><div class="t" style="left:232.6px;top:619.79px;font-size:10.6px;line-height:13.78px;color:#242424;">Temperature interval</div><div style="left:340px;top:619.6px;width:12.8px;height:12.8px;background:#fff;border:1px solid #333;border-radius:50%;box-sizing:border-box;"></div><div class="t" style="left:356px;top:619.79px;font-size:10.6px;line-height:13.78px;color:#242424;">Number of steps</div><div style="left:216px;top:637.6px;width:59.2px;height:17.6px;background:#fff;border:1px solid #b4b4b4;box-sizing:border-box;"></div><div style="left:260.8px;top:638.6px;width:13.4px;height:15.6px;background:#efefef;border-left:1px solid #c4c4c4;box-sizing:border-box;"></div><div style="left:260.8px;top:645.9px;width:13.4px;height:1px;background:#cfcfcf;"></div><svg style="left:264px;top:639.8px;" width="7.2" height="5.2" viewBox="0 0 6 5" preserveAspectRatio="none"><path d="M0.3 4.6 L3 0.6 L5.7 4.6 Z" fill="#333"/></svg><svg style="left:264px;top:647.8px;" width="7.2" height="5.2" viewBox="0 0 6 5" preserveAspectRatio="none"><path d="M0.3 0.4 L3 4.4 L5.7 0.4 Z" fill="#333"/></svg><div class="t" style="right:1140.8px;top:640.19px;font-size:10.6px;line-height:13.78px;color:#242424;">1.5</div><div style="left:276.6px;top:637.6px;width:36.6px;height:17.6px;background:#e2e2e2;border:1px solid #b6b6b6;box-sizing:border-box;"></div><div class="t" style="left:281px;top:640.79px;font-size:10.6px;line-height:13.78px;color:#242424;">°C</div><svg style="left:299.6px;top:643.6px;" width="8.8" height="6" viewBox="0 0 10 7" preserveAspectRatio="none"><path d="M1 1.5 L5 5.5 L9 1.5" fill="none" stroke="#444" stroke-width="1.3"/></svg><div style="left:340px;top:637.6px;width:97.2px;height:17.6px;background:#f0f0f0;border:1px solid #cccccc;box-sizing:border-box;"></div><svg style="left:426px;top:639.8px;" width="7.2" height="5.2" viewBox="0 0 6 5" preserveAspectRatio="none"><path d="M0.3 4.6 L3 0.6 L5.7 4.6 Z" fill="#7a7a7a"/></svg><svg style="left:426px;top:647.8px;" width="7.2" height="5.2" viewBox="0 0 6 5" preserveAspectRatio="none"><path d="M0.3 0.4 L3 4.4 L5.7 0.4 Z" fill="#7a7a7a"/></svg><div class="t" style="left:342.8px;top:640.19px;font-size:10.6px;line-height:13.78px;color:#8a8a8a;">14</div><div class="t" style="left:216.6px;top:680.19px;font-size:10.6px;line-height:13.78px;color:#242424;">Estimated experiment length: 1 hours 50 minutes and 22 seconds</div></div></div><div class="win" style="left:700px;top:487.6px;"><div style="left:0px;top:0px;width:700px;height:30.4px;background:#fff;"></div><svg style="left:7.9px;top:6.6px;" width="16.4" height="16.4" viewBox="0 0 16 16" preserveAspectRatio="none"><defs><linearGradient id="ig" x1="0" y1="0" x2="0" y2="1"><stop offset="0" stop-color="#e8306f"/><stop offset="1" stop-color="#c4004e"/></linearGradient></defs><rect x="0.3" y="0.3" width="15.4" height="15.4" rx="2.6" fill="#d4005a"/><rect x="0.3" y="0.3" width="15.4" height="15.4" rx="2.6" fill="url(#ig)"/><path d="M1.4 10.2 C1.8 8 3.6 4.6 5.4 4.4 C6.2 4.3 6.8 4.8 7.2 5.4 C7.8 3.6 9 2.9 10 2.9 C12.6 2.9 14 7 14.6 10.2 Z" fill="#fff"/><path d="M5.2 9.2 L7.4 5" stroke="#d4005a" stroke-width="0.6"/><rect x="1.4" y="8.7" width="13.2" height="0.5" fill="#e23a78"/></svg><div class="t" style="left:29px;top:8.2px;font-size:12.06px;line-height:15.68px;color:#1a1a1a;">New SOP* - Temperature Trend</div><svg style="left:571px;top:9px;" width="12" height="12" viewBox="0 0 12 12" preserveAspectRatio="none"><path d="M1 6.5 L11 6.5" stroke="#333" stroke-width="1"/></svg><svg style="left:618.8px;top:9.4px;" width="12" height="12" viewBox="0 0 12 12" preserveAspectRatio="none"><rect x="1.5" y="1.5" width="9.5" height="9.5" fill="none" stroke="#333" stroke-width="1"/></svg><svg style="left:667.2px;top:9.2px;" width="12" height="12" viewBox="0 0 12 12" preserveAspectRatio="none"><path d="M1 1 L11 11 M11 1 L1 11" stroke="#333" stroke-width="1"/></svg><div style="left:0px;top:30.2px;width:700px;height:21.2px;background:linear-gradient(#f4f4f4,#f8f8f8);"></div><div class="t" style="left:13.6px;top:35.04px;font-size:12px;line-height:15.6px;color:#111;">File</div><div class="t" style="left:50px;top:35.04px;font-size:12px;line-height:15.6px;color:#111;">Help</div><div style="left:0px;top:51.4px;width:700px;height:23px;background:linear-gradient(#fcfcfc 0%,#f7f7f7 50%,#e9e9e9 100%);"></div><div style="left:0px;top:73.6px;width:700px;height:1.8px;background:linear-gradient(#c4c4c4,#8c8c8c);"></div><svg style="left:9.5px;top:56.6px;" width="13.4" height="13.4" viewBox="0 0 16 16" preserveAspectRatio="none"><defs><radialGradient id="gl" cx="0.4" cy="0.3" r="0.8"><stop offset="0" stop-color="#4fbf3f"/><stop offset="0.65" stop-color="#239a23"/><stop offset="1" stop-color="#137316"/></radialGradient></defs><circle cx="8" cy="8" r="7.5" fill="url(#gl)"/><path d="M3.2 8 L7.6 4.4 L7.6 6.9 L12.6 6.9 L12.6 9.1 L7.6 9.1 L7.6 11.6 Z" fill="#fff"/></svg><div class="t" style="left:26px;top:57.04px;font-size:12px;line-height:15.6px;color:#111;">Back</div><svg style="left:59.8px;top:56.6px;" width="13.4" height="13.4" viewBox="0 0 16 16" preserveAspectRatio="none"><defs><radialGradient id="gr" cx="0.4" cy="0.3" r="0.8"><stop offset="0" stop-color="#4fbf3f"/><stop offset="0.65" stop-color="#239a23"/><stop offset="1" stop-color="#137316"/></radialGradient></defs><circle cx="8" cy="8" r="7.5" fill="url(#gr)"/><path d="M12.8 8 L8.4 4.4 L8.4 6.9 L3.4 6.9 L3.4 9.1 L8.4 9.1 L8.4 11.6 Z" fill="#fff"/></svg><div style="left:78.4px;top:56px;width:1px;height:14.8px;background:#c6c6c6;"></div><svg style="left:83.8px;top:56px;" width="14.4" height="13.8" viewBox="0 0 16 15.3" preserveAspectRatio="none"><path d="M1 6.5 L1 14.6 L12.6 14.6 L12.6 7.6 L6 7.6 L5 6.5 Z" fill="#e9b530" stroke="#b98a14" stroke-width="0.7"/><path d="M1.4 14.4 L4 9.4 L15.4 9.4 L12.8 14.6 Z" fill="#ffdf7e" stroke="#c99a22" stroke-width="0.6"/><path d="M5.6 3.2 C8.4 0.6 12 1.4 13.2 4.4 L14.8 3.8 L13.4 8.4 L9.6 6 L11.2 5.3 C10.2 3.4 8 2.8 5.6 3.2 Z" fill="#2fa82f" stroke="#157a15" stroke-width="0.5"/></svg><svg style="left:104px;top:57.4px;" width="11.8" height="11" viewBox="0 0 16 15" preserveAspectRatio="none"><defs><linearGradient id="sg" x1="0" y1="0" x2="0" y2="1"><stop offset="0" stop-color="#23309c"/><stop offset="1" stop-color="#5563c9"/></linearGradient></defs><rect x="0.8" y="0.8" width="14.4" height="13.4" rx="0.8" fill="url(#sg)"/><rect x="5" y="0.8" width="5.6" height="7.6" fill="#f3f5ff"/><rect x="4.6" y="10" width="6.6" height="4.2" fill="#c4cbea"/><rect x="8.2" y="10.6" width="2" height="3.2" fill="#2a379f"/></svg><svg style="left:122.4px;top:56px;" width="13" height="12.4" viewBox="0 0 16 15.3" preserveAspectRatio="none"><rect x="1" y="2" width="12.4" height="12.6" fill="#f2f3fb" stroke="#9aa0cc" stroke-width="0.8"/><rect x="1.4" y="2.4" width="11.6" height="3" fill="#b9bde6"/><path d="M8 11.4 L10.4 13.8 L14.6 9.4" fill="none" stroke="#2d49c2" stroke-width="1.6"/><path d="M4.2 12.6 L5 9.4 L12.6 1 L15 3 L7.4 11.6 Z" fill="#e2762c" stroke="#8f3d12" stroke-width="0.5"/><path d="M12 1.6 L14.6 3.6 L15.4 2.4 L13 0.6 Z" fill="#cf2030"/><path d="M4.2 12.6 L5 9.4 L7.4 11.6 Z" fill="#f1d9a6"/></svg><div style="left:140.6px;top:56px;width:1px;height:14.8px;background:#c6c6c6;"></div><svg style="left:147.4px;top:57.6px;" width="11.8" height="11.8" viewBox="0 0 16 16" preserveAspectRatio="none"><defs><radialGradient id="hg" cx="0.45" cy="0.35" r="0.75"><stop offset="0" stop-color="#6f96f2"/><stop offset="0.7" stop-color="#2a52cf"/><stop offset="1" stop-color="#1e3fae"/></radialGradient></defs><circle cx="8" cy="8" r="7.7" fill="#b9c6ea"/><circle cx="8" cy="8" r="6.3" fill="url(#hg)"/><path d="M5.8 6.4 C5.8 3.8 10.4 3.8 10.4 6.4 C10.4 8 8.2 8 8.2 9.8" fill="none" stroke="#fff" stroke-width="1.8"/><circle cx="8.2" cy="12" r="1.05" fill="#fff"/></svg><div style="left:210.2px;top:75.4px;width:490px;height:405.6px;background:#f0f0f0;"></div><div style="left:2px;top:75.4px;width:206.8px;height:405.6px;background:#fff;"></div><div style="left:208.8px;top:75.4px;width:1.4px;height:405.6px;background:#b4b4b4;"></div><div style="left:210.2px;top:75.4px;width:1.2px;height:405.6px;background:#fafafa;"></div><div style="left:12.6px;top:94.54px;width:1px;height:165.94px;background:#b0b0b0;"></div><div style="left:28.4px;top:121.88px;width:1px;height:51.36px;background:#b0b0b0;"></div><div style="left:28.4px;top:194.58px;width:1px;height:51.36px;background:#b0b0b0;"></div><div style="left:28.4px;top:267.28px;width:1px;height:22.28px;background:#b0b0b0;"></div><svg style="left:8.8px;top:81.2px;" width="6" height="9.6" viewBox="0 0 6 9.6" preserveAspectRatio="none"><path d="M0.2 0.2 L5.6 4.8 L0.2 9.4 Z" fill="#111"/></svg><div class="t" style="left:24px;top:79.52px;font-size:11px;line-height:14.3px;color:#242424;max-width:184px;overflow:hidden;">Measurement type: Temperature Trend</div><div style="left:12.6px;top:100.54px;width:9.8px;height:1px;background:#b0b0b0;"></div><div class="t" style="left:39.2px;top:94.06px;font-size:11px;line-height:14.3px;color:#242424;">Instrument configuration</div><div style="left:12.6px;top:115.08px;width:9.8px;height:1px;background:#b0b0b0;"></div><div style="left:8.4px;top:110.48px;width:9.4px;height:9.2px;background:linear-gradient(#fff,#e9e9e9);border:1px solid #adadad;box-sizing:border-box;"></div><div style="left:10.6px;top:114.58px;width:5.2px;height:1px;background:#6d78b0;"></div><div class="t" style="left:39.2px;top:108.6px;font-size:11px;line-height:14.3px;color:#242424;">Sample</div><div style="left:28.4px;top:129.62px;width:8.8px;height:1px;background:#b0b0b0;"></div><div class="t" style="left:55.2px;top:123.14px;font-size:11px;line-height:14.3px;color:#242424;">Material</div><div style="left:28.4px;top:144.16px;width:8.8px;height:1px;background:#b0b0b0;"></div><div class="t" style="left:55.2px;top:137.68px;font-size:11px;line-height:14.3px;color:#242424;">Dispersant</div><div style="left:28.4px;top:158.7px;width:8.8px;height:1px;background:#b0b0b0;"></div><div class="t" style="left:55.2px;top:152.22px;font-size:11px;line-height:14.3px;color:#242424;">General options</div><div style="left:28.4px;top:173.24px;width:8.8px;height:1px;background:#b0b0b0;"></div><div class="t" style="left:55.2px;top:166.76px;font-size:11px;line-height:14.3px;color:#242424;">Cell</div><div style="left:12.6px;top:187.78px;width:9.8px;height:1px;background:#b0b0b0;"></div><div style="left:8.4px;top:183.18px;width:9.4px;height:9.2px;background:linear-gradient(#fff,#e9e9e9);border:1px solid #adadad;box-sizing:border-box;"></div><div style="left:10.6px;top:187.28px;width:5.2px;height:1px;background:#6d78b0;"></div><div class="t" style="left:39.2px;top:181.3px;font-size:11px;line-height:14.3px;color:#242424;">Trend</div><div style="left:28.4px;top:202.32px;width:8.8px;height:1px;background:#b0b0b0;"></div><div class="t" style="left:55.2px;top:195.84px;font-size:11px;line-height:14.3px;color:#242424;">Sequence</div><div style="left:28.4px;top:216.86px;width:8.8px;height:1px;background:#b0b0b0;"></div><div class="t" style="left:55.2px;top:210.38px;font-size:11px;line-height:14.3px;color:#242424;">Instructions</div><div style="left:28.4px;top:231.4px;width:8.8px;height:1px;background:#b0b0b0;"></div><div class="t" style="left:55.2px;top:224.92px;font-size:11px;line-height:14.3px;color:#242424;">Reports</div><div style="left:28.4px;top:245.94px;width:8.8px;height:1px;background:#b0b0b0;"></div><div class="t" style="left:55.2px;top:239.46px;font-size:11px;line-height:14.3px;color:#242424;">Export</div><div style="left:12.6px;top:260.48px;width:9.8px;height:1px;background:#b0b0b0;"></div><div style="left:8.4px;top:255.88px;width:9.4px;height:9.2px;background:linear-gradient(#fff,#e9e9e9);border:1px solid #adadad;box-sizing:border-box;"></div><div style="left:10.6px;top:259.98px;width:5.2px;height:1px;background:#6d78b0;"></div><div style="left:37.6px;top:253.28px;width:94.9px;height:13.2px;background:#eeeeee;"></div><svg style="left:26px;top:256.68px;" width="9" height="7.6" viewBox="0 0 10 8" preserveAspectRatio="none"><path d="M0 3 L5 3 L5 0.6 L9.4 4 L5 7.4 L5 5 L0 5 Z" fill="#22b422" stroke="#128a12" stroke-width="0.5"/></svg><div class="t" style="left:39.2px;top:254px;font-size:11px;line-height:14.3px;color:#242424;">Size measurement</div><div style="left:28.4px;top:275.02px;width:8.8px;height:1px;background:#b0b0b0;"></div><div class="t" style="left:55.2px;top:268.54px;font-size:11px;line-height:14.3px;color:#242424;">Advanced</div><div style="left:28.4px;top:289.56px;width:8.8px;height:1px;background:#b0b0b0;"></div><div class="t" style="left:55.2px;top:283.08px;font-size:11px;line-height:14.3px;color:#242424;">Data processing</div><div style="left:2px;top:465.8px;width:206.8px;height:15.2px;background:#f0f0f0;"></div><div style="left:21.2px;top:466.6px;width:159.6px;height:13.4px;background:#cbcbcb;"></div><svg style="left:8.4px;top:470px;" width="6" height="8" viewBox="0 0 6 8" preserveAspectRatio="none"><path d="M5 0.8 L1.4 4 L5 7.2" fill="none" stroke="#333" stroke-width="1.6"/></svg><svg style="left:194.8px;top:470px;" width="6" height="8" viewBox="0 0 6 8" preserveAspectRatio="none"><path d="M1 0.8 L4.6 4 L1 7.2" fill="none" stroke="#333" stroke-width="1.6"/></svg><div style="left:0px;top:481px;width:700px;height:6.6px;background:#ececec;"></div><div style="left:0px;top:0px;width:1.8px;height:407px;background:#cccccc;"></div><div style="left:0px;top:407px;width:1.8px;height:80.6px;background:#5c5c5c;"></div><div style="left:0px;top:0px;width:700px;height:1.4px;background:#e6e6e6;"></div><div style="left:698.2px;top:-1.2px;width:1.8px;height:488px;background:#6e6e6e;"></div><div style="left:-700px;top:-487.6px;width:1400px;height:974px;"><div style="left:917.6px;top:576.4px;width:402px;height:110.4px;border:1px solid #dcdcdc;box-sizing:border-box;"></div><div style="left:922.8px;top:572.4px;width:68.2px;height:8px;background:#f0f0f0;"></div><div class="t" style="left:924.2px;top:568.24px;font-size:11.7px;line-height:15.21px;color:#242424;">At each step</div><div class="t" style="left:924px;top:582.79px;font-size:10.6px;line-height:13.78px;color:#242424;">Equilibration time (seconds):</div><div style="left:923.6px;top:595px;width:97.6px;height:16.8px;background:#fff;border:1px solid #b4b4b4;box-sizing:border-box;"></div><div style="left:1008.8px;top:596px;width:11.4px;height:14.8px;background:#efefef;border-left:1px solid #c4c4c4;box-sizing:border-box;"></div><div style="left:1008.8px;top:602.9px;width:11.4px;height:1px;background:#cfcfcf;"></div><svg style="left:1011px;top:596.8px;" width="7.2" height="5.2" viewBox="0 0 6 5" preserveAspectRatio="none"><path d="M0.3 4.6 L3 0.6 L5.7 4.6 Z" fill="#333"/></svg><svg style="left:1011px;top:604.8px;" width="7.2" height="5.2" viewBox="0 0 6 5" preserveAspectRatio="none"><path d="M0.3 0.4 L3 4.4 L5.7 0.4 Z" fill="#333"/></svg><div class="t" style="left:926.4px;top:597.19px;font-size:10.6px;line-height:13.78px;color:#242424;">120</div><div style="left:1066px;top:596px;width:12.8px;height:12.8px;background:#fff;border:1px solid #444;box-sizing:border-box;"></div><svg style="left:1067.8px;top:597.6px;" width="9.6" height="9.6" viewBox="0 0 10 10" preserveAspectRatio="none"><path d="M1.4 5.2 L4 7.8 L8.8 2.2" fill="none" stroke="#222" stroke-width="1.2"/></svg><div class="t" style="left:1081.6px;top:596.19px;font-size:10.6px;line-height:13.78px;color:#242424;">Optimise measurement settings</div><div class="t" style="left:924px;top:623.79px;font-size:10.6px;line-height:13.78px;color:#242424;">Number of measurements:</div><div style="left:923.6px;top:636px;width:97.6px;height:16.8px;background:#fff;border:1px solid #b4b4b4;box-sizing:border-box;"></div><div style="left:1008.8px;top:637px;width:11.4px;height:14.8px;background:#efefef;border-left:1px solid #c4c4c4;box-sizing:border-box;"></div><div style="left:1008.8px;top:643.9px;width:11.4px;height:1px;background:#cfcfcf;"></div><svg style="left:1011px;top:637.8px;" width="7.2" height="5.2" viewBox="0 0 6 5" preserveAspectRatio="none"><path d="M0.3 4.6 L3 0.6 L5.7 4.6 Z" fill="#333"/></svg><svg style="left:1011px;top:645.8px;" width="7.2" height="5.2" viewBox="0 0 6 5" preserveAspectRatio="none"><path d="M0.3 0.4 L3 4.4 L5.7 0.4 Z" fill="#333"/></svg><div class="t" style="left:926.4px;top:638.19px;font-size:10.6px;line-height:13.78px;color:#242424;">3</div><div class="t" style="left:1066.4px;top:623.79px;font-size:10.6px;line-height:13.78px;color:#242424;">Delay between measurements (seconds):</div><div style="left:1065px;top:636px;width:99.2px;height:16.8px;background:#fff;border:1px solid #b4b4b4;box-sizing:border-box;"></div><div style="left:1151.8px;top:637px;width:11.4px;height:14.8px;background:#efefef;border-left:1px solid #c4c4c4;box-sizing:border-box;"></div><div style="left:1151.8px;top:643.9px;width:11.4px;height:1px;background:#cfcfcf;"></div><svg style="left:1154px;top:637.8px;" width="7.2" height="5.2" viewBox="0 0 6 5" preserveAspectRatio="none"><path d="M0.3 4.6 L3 0.6 L5.7 4.6 Z" fill="#333"/></svg><svg style="left:1154px;top:645.8px;" width="7.2" height="5.2" viewBox="0 0 6 5" preserveAspectRatio="none"><path d="M0.3 0.4 L3 4.4 L5.7 0.4 Z" fill="#333"/></svg><div class="t" style="left:1067.8px;top:638.19px;font-size:10.6px;line-height:13.78px;color:#242424;">0</div><div style="left:922.6px;top:666px;width:12.8px;height:12.8px;background:#fff;border:1px solid #444;box-sizing:border-box;"></div><svg style="left:924.4px;top:667.6px;" width="9.6" height="9.6" viewBox="0 0 10 10" preserveAspectRatio="none"><path d="M1.4 5.2 L4 7.8 L8.8 2.2" fill="none" stroke="#222" stroke-width="1.2"/></svg><div class="t" style="left:939px;top:666.19px;font-size:10.6px;line-height:13.78px;color:#242424;">Append measurement number to sample name.</div><div style="left:917.6px;top:700.4px;width:402px;height:59.2px;border:1px solid #dcdcdc;box-sizing:border-box;"></div><div style="left:922.8px;top:696.4px;width:120.2px;height:8px;background:#f0f0f0;"></div><div class="t" style="left:924.2px;top:692.24px;font-size:11.7px;line-height:15.21px;color:#242424;">Measurement duration</div><div style="left:922.6px;top:709.6px;width:12.8px;height:12.8px;background:#fff;border:1px solid #333;border-radius:50%;box-sizing:border-box;"></div><div style="left:925.4px;top:712.4px;width:7.2px;height:7.2px;background:#1a1a1a;border-radius:50%;"></div><div class="t" style="left:938.6px;top:709.79px;font-size:10.6px;line-height:13.78px;color:#242424;">Automatic</div><div style="left:922.6px;top:728.6px;width:12.8px;height:12.8px;background:#fff;border:1px solid #333;border-radius:50%;box-sizing:border-box;"></div><div class="t" style="left:938.6px;top:728.79px;font-size:10.6px;line-height:13.78px;color:#242424;">Manual</div><div class="t" style="left:1066.4px;top:711.79px;font-size:10.6px;line-height:13.78px;color:#8a8a8a;">Number of runs:</div><div style="left:1065px;top:727px;width:100px;height:17.2px;background:#f0f0f0;border:1px solid #cccccc;box-sizing:border-box;"></div><svg style="left:1154.8px;top:729px;" width="7.2" height="5.2" viewBox="0 0 6 5" preserveAspectRatio="none"><path d="M0.3 4.6 L3 0.6 L5.7 4.6 Z" fill="#7a7a7a"/></svg><svg style="left:1154.8px;top:737px;" width="7.2" height="5.2" viewBox="0 0 6 5" preserveAspectRatio="none"><path d="M0.3 0.4 L3 4.4 L5.7 0.4 Z" fill="#7a7a7a"/></svg><div class="t" style="left:1067.8px;top:729.39px;font-size:10.6px;line-height:13.78px;color:#8a8a8a;">11</div><div class="t" style="left:1185px;top:711.79px;font-size:10.6px;line-height:13.78px;color:#8a8a8a;">Run duration (seconds):</div><div style="left:1184px;top:727px;width:99.2px;height:17.2px;background:#f0f0f0;border:1px solid #cccccc;box-sizing:border-box;"></div><svg style="left:1273px;top:729px;" width="7.2" height="5.2" viewBox="0 0 6 5" preserveAspectRatio="none"><path d="M0.3 4.6 L3 0.6 L5.7 4.6 Z" fill="#7a7a7a"/></svg><svg style="left:1273px;top:737px;" width="7.2" height="5.2" viewBox="0 0 6 5" preserveAspectRatio="none"><path d="M0.3 0.4 L3 4.4 L5.7 0.4 Z" fill="#7a7a7a"/></svg><div class="t" style="left:1186.8px;top:729.39px;font-size:10.6px;line-height:13.78px;color:#8a8a8a;">10</div><div style="left:917.6px;top:774.4px;width:402px;height:45.2px;border:1px solid #dcdcdc;box-sizing:border-box;"></div><div style="left:922.8px;top:770.4px;width:74.2px;height:8px;background:#f0f0f0;"></div><div class="t" style="left:924.2px;top:766.24px;font-size:11.7px;line-height:15.21px;color:#242424;">Partial results</div><div style="left:922.6px;top:791.2px;width:12.8px;height:12.8px;background:#fff;border:1px solid #444;box-sizing:border-box;"></div><div class="t" style="left:939px;top:791.39px;font-size:10.6px;line-height:13.78px;color:#242424;">Allow results to be saved containing correlation data only</div><div class="t" style="left:921px;top:868.19px;font-size:10.6px;line-height:13.78px;color:#242424;">Estimated experiment length: 1 hours 50 minutes and 22 seconds</div></div></div></div></body></html>
